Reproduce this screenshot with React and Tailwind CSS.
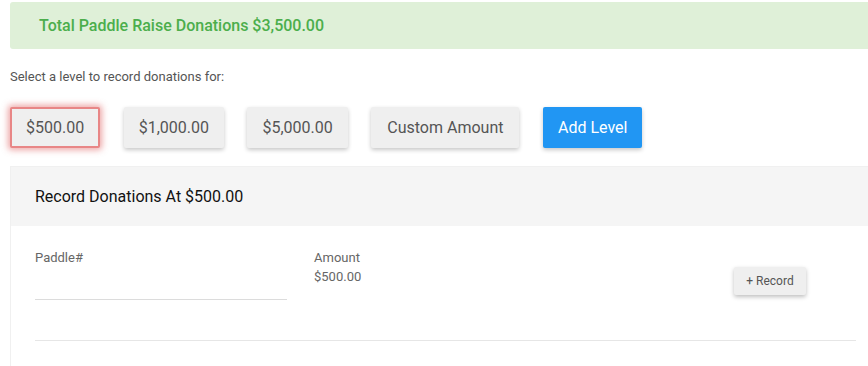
import React from 'react';

const levels = ['$500.00', '$1,000.00', '$5,000.00', 'Custom Amount'];

const App = () => {
    const selected = 0;

    return (
        <div className="w-[868px] h-[366px] overflow-hidden bg-white font-['Roboto',sans-serif]">
            <div className="ml-[10px] w-[870px]">
                <div className="mt-[2px] h-[47px] flex items-center pl-[29px] bg-[#dff0d8] rounded-[3px]">
                    <h2 className="text-[16px] font-medium text-[#4cae4c]">Total Paddle Raise Donations $3,500.00</h2>
                </div>

                <p className="mt-[20px] text-[13px] leading-[16px] text-[#555]">Select a level to record donations for:</p>

                <div className="mt-[22px] flex items-center gap-[23.5px]">
                    {levels.map((label, i) => (
                        <button
                            key={label}
                            className={`h-[41px] rounded-[2px] bg-[#efefef] text-[16px] text-[#555] ${i === selected ? 'px-[14px] border-2 border-[#e88686] shadow-[0_0_6px_2px_rgba(220,80,80,0.5)]' : i === 3 ? 'px-[16px] shadow-[0_2px_4px_rgba(0,0,0,0.22)]' : 'px-[15px] shadow-[0_2px_4px_rgba(0,0,0,0.22)]'}`}
                        >
                            {label}
                        </button>
                    ))}
                    <button className="h-[41px] px-[15px] rounded-[2px] bg-[#2196f3] text-[16px] text-white shadow-[0_2px_4px_rgba(0,0,0,0.22)]">
                        Add Level
                    </button>
                </div>

                <div className="mt-[18px] border-l border-t border-[#f0f0f0]">
                    <div className="h-[59px] flex items-center pl-[24px] bg-[#f5f5f5]">
                        <h3 className="text-[16px] text-[#111]">Record Donations At $500.00</h3>
                    </div>
                    <div className="px-[24px] pt-[24px] pb-[30px]">
                        <div className="flex items-start h-[91px] border-b border-[#e6e6e6]">
                            <div className="w-[252px]">
                                <label className="block text-[13px] leading-[16px] text-[#666]">Paddle#</label>
                                <div className="mt-[33px] h-[1px] bg-[#dcdcdc]" />
                            </div>
                            <div className="ml-[27px] w-[420px] text-[13px] text-[#666]">
                                <p className="leading-[16px]">Amount</p>
                                <p className="mt-[3px] leading-[16px]">$500.00</p>
                            </div>
                            <button className="mt-[17px] h-[28px] w-[72px] rounded-[2px] bg-[#efefef] text-[12px] text-[#555] shadow-[0_2px_4px_rgba(0,0,0,0.25)]">
                                + Record
                            </button>
                        </div>
                    </div>
                </div>
            </div>
        </div>
    );
};

export default App;
